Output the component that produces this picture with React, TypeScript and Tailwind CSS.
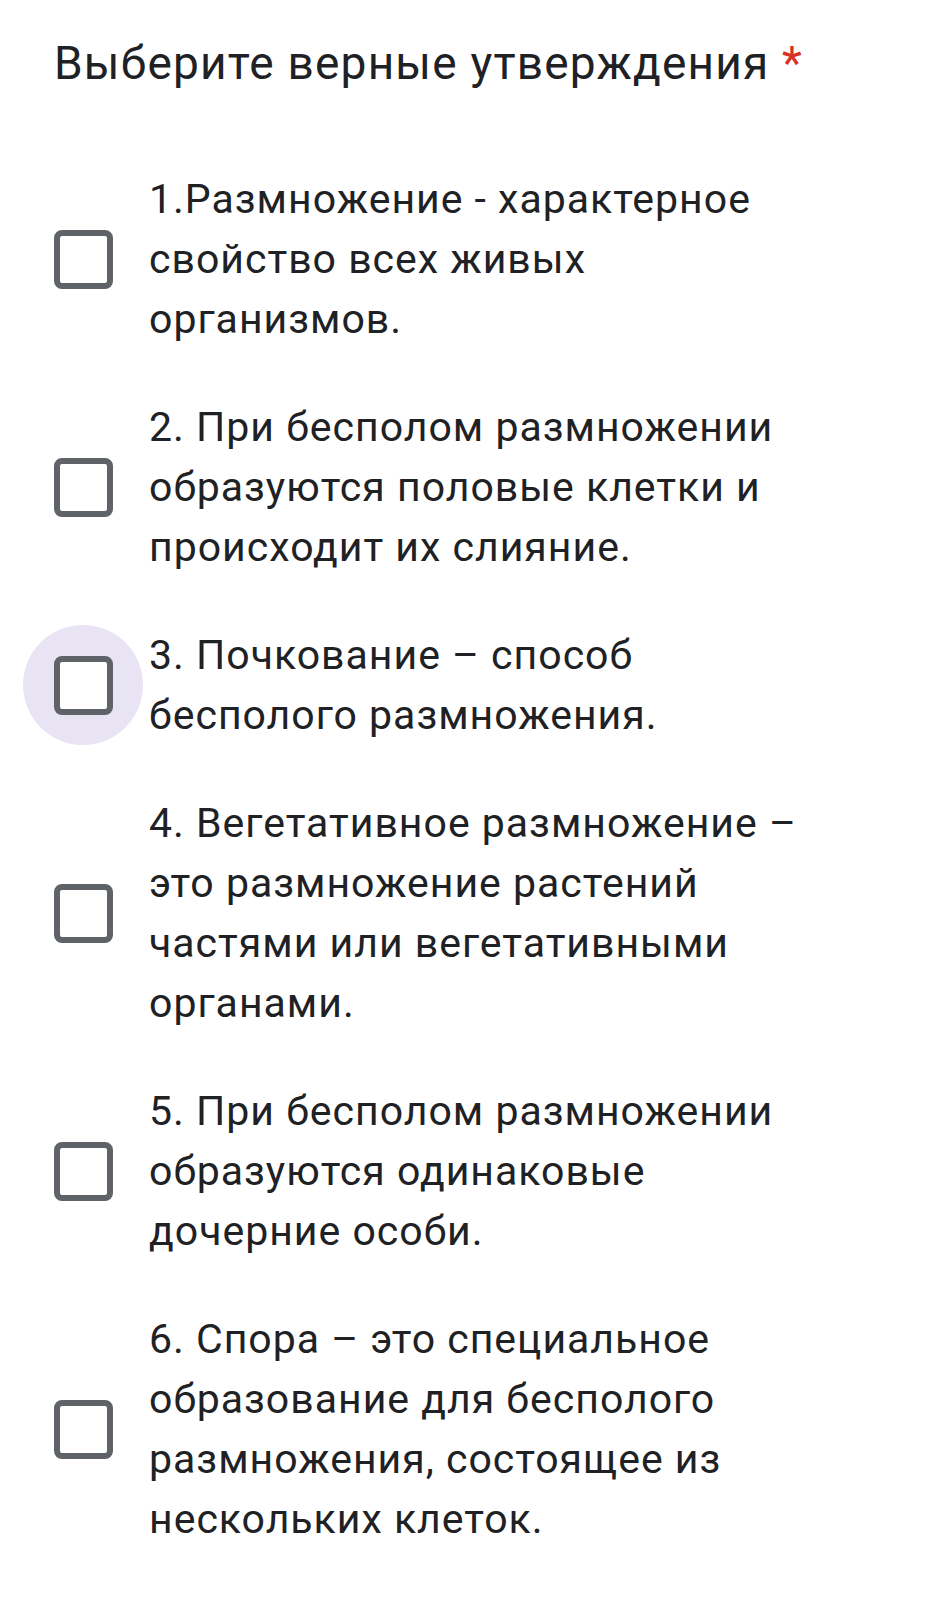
import React from 'react';

const items: { lines: string[]; focused?: boolean }[] = [
  { lines: ['1.Размножение - характерное', 'свойство всех живых', 'организмов.'] },
  { lines: ['2. При бесполом размножении', 'образуются половые клетки и', 'происходит их слияние.'] },
  { lines: ['3. Почкование – способ', 'бесполого размножения.'], focused: true },
  {
    lines: [
      '4. Вегетативное размножение –',
      'это размножение растений',
      'частями или вегетативными',
      'органами.',
    ],
  },
  { lines: ['5. При бесполом размножении', 'образуются одинаковые', 'дочерние особи.'] },
  {
    lines: [
      '6. Спора – это специальное',
      'образование для бесполого',
      'размножения, состоящее из',
      'нескольких клеток.',
    ],
  },
];

const Option = ({ lines, focused }: { lines: string[]; focused?: boolean }) => (
  <label className="flex items-center gap-[6px]">
    <div
      className={`flex h-[120px] w-[120px] shrink-0 items-center justify-center rounded-full ${
        focused ? 'bg-[#e9e4f4]' : 'bg-transparent'
      }`}
    >
      <div className="h-[59px] w-[59px] rounded-[8px] border-[6px] border-[#5f6368] bg-white" />
    </div>
    <div className="text-[41px] leading-[60px] tracking-[1px] text-[#202124]">
      {lines.map((l) => (
        <span key={l} className="block whitespace-nowrap">
          {l}
        </span>
      ))}
    </div>
  </label>
);

export default function App() {
  return (
    <div className="min-h-[1599px] w-[927px] bg-white font-['Roboto','Liberation_Sans',sans-serif]">
      <div className="pt-[33px] pl-[54px]">
        <h1 className="text-[46px] font-normal leading-[60px] tracking-[1.2px] text-[#202124] whitespace-nowrap">
          Выберите верные утверждения <span className="text-[#d93025]">*</span>
        </h1>
      </div>
      <div className="mt-[76px] flex flex-col gap-[48px] pl-[23px]">
        {items.map((it, i) => (
          <Option key={i} lines={it.lines} focused={it.focused} />
        ))}
      </div>
    </div>
  );
}
